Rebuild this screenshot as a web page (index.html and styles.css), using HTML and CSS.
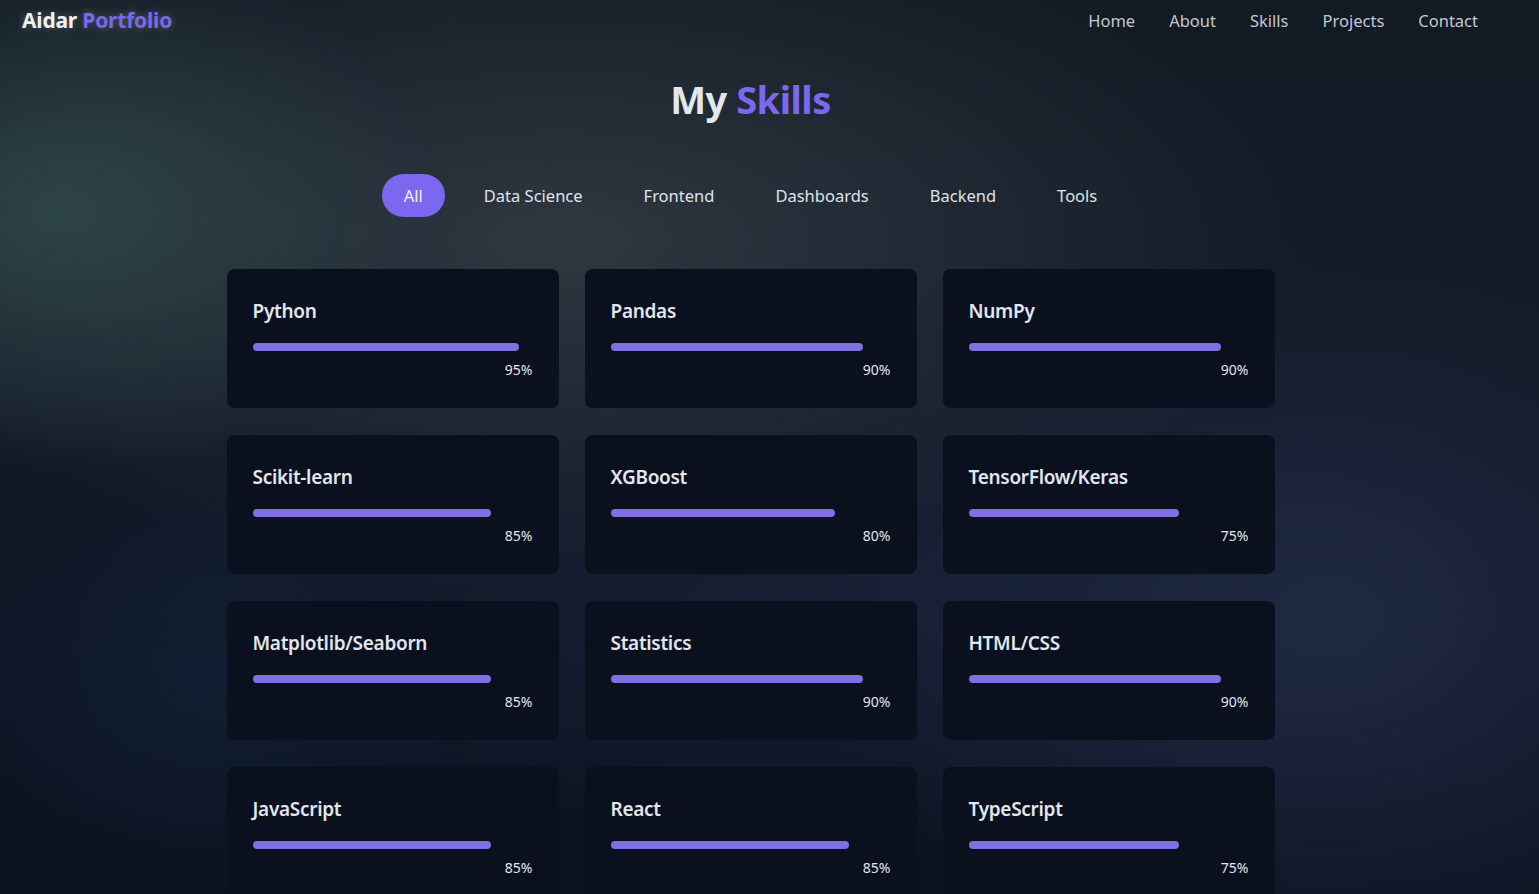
FILE: index.html
```html
<!DOCTYPE html>
<html lang="en">
<head>
<meta charset="utf-8">
<title>Aidar Portfolio — Skills</title>
<link rel="stylesheet" href="styles.css">
</head>
<body>
<div class="page">
  <header class="nav">
    <div class="logo">Aidar <span class="accent">Portfolio</span></div>
    <nav class="links">
      <a href="#">Home</a>
      <a href="#">About</a>
      <a href="#">Skills</a>
      <a href="#">Projects</a>
      <a href="#">Contact</a>
    </nav>
  </header>

  <section class="skills">
    <h1 class="title">My <span class="accent">Skills</span></h1>
    <div class="filters">
      <button class="filter active">All</button>
      <button class="filter">Data Science</button>
      <button class="filter">Frontend</button>
      <button class="filter">Dashboards</button>
      <button class="filter">Backend</button>
      <button class="filter">Tools</button>
    </div>
    <div class="grid">
      <div class="card"><h3>Python</h3><div class="track"><div class="bar" style="width:95%"></div></div><div class="pct">95%</div></div>
      <div class="card"><h3>Pandas</h3><div class="track"><div class="bar" style="width:90%"></div></div><div class="pct">90%</div></div>
      <div class="card"><h3>NumPy</h3><div class="track"><div class="bar" style="width:90%"></div></div><div class="pct">90%</div></div>
      <div class="card"><h3>Scikit-learn</h3><div class="track"><div class="bar" style="width:85%"></div></div><div class="pct">85%</div></div>
      <div class="card"><h3>XGBoost</h3><div class="track"><div class="bar" style="width:80%"></div></div><div class="pct">80%</div></div>
      <div class="card"><h3>TensorFlow/Keras</h3><div class="track"><div class="bar" style="width:75%"></div></div><div class="pct">75%</div></div>
      <div class="card"><h3>Matplotlib/Seaborn</h3><div class="track"><div class="bar" style="width:85%"></div></div><div class="pct">85%</div></div>
      <div class="card"><h3>Statistics</h3><div class="track"><div class="bar" style="width:90%"></div></div><div class="pct">90%</div></div>
      <div class="card"><h3>HTML/CSS</h3><div class="track"><div class="bar" style="width:90%"></div></div><div class="pct">90%</div></div>
      <div class="card"><h3>JavaScript</h3><div class="track"><div class="bar" style="width:85%"></div></div><div class="pct">85%</div></div>
      <div class="card"><h3>React</h3><div class="track"><div class="bar" style="width:85%"></div></div><div class="pct">85%</div></div>
      <div class="card"><h3>TypeScript</h3><div class="track"><div class="bar" style="width:75%"></div></div><div class="pct">75%</div></div>
    </div>
  </section>
</div>
</body>
</html>
```

FILE: styles.css
```css
* { box-sizing: border-box; }

html, body {
  margin: 0;
  height: 100%;
  overflow: hidden;
}

body {
  font-family: "Noto Sans", "Open Sans", sans-serif;
  color: #e2e8f0;
  background-color: #0b1120;
  background-image:
    radial-gradient(ellipse 380px 260px at 60px 210px, rgba(48, 74, 76, 0.85), rgba(48, 74, 76, 0) 100%),
    radial-gradient(ellipse 760px 330px at 560px 240px, rgba(50, 58, 68, 0.9), rgba(50, 58, 68, 0) 100%),
    radial-gradient(ellipse 520px 380px at 1330px 620px, rgba(32, 42, 68, 0.95), rgba(32, 42, 68, 0) 100%),
    radial-gradient(ellipse 700px 260px at 800px 600px, rgba(26, 36, 58, 0.7), rgba(26, 36, 58, 0) 100%),
    radial-gradient(ellipse 260px 220px at 200px 680px, rgba(18, 34, 54, 0.7), rgba(18, 34, 54, 0) 100%),
    linear-gradient(180deg, #121a24 0%, #121a26 40%, #0d1424 75%, #0b111f 100%);
}

.page {
  width: calc(100% - 38px);
}

.accent { color: #7b68ee; }

.nav {
  display: flex;
  justify-content: space-between;
  align-items: center;
  height: 40px;
  padding: 0 22px;
}

.logo {
  font-size: 21px;
  font-weight: 700;
  color: #eef0f6;
  text-shadow: 0 0 8px rgba(255, 255, 255, 0.25);
  letter-spacing: -0.2px;
}

.links {
  display: flex;
  gap: 34px;
  margin-right: 1px;
}

.links a {
  color: #c4c8d0;
  text-decoration: none;
  font-size: 16.5px;
}

.skills {
  display: flex;
  flex-direction: column;
  align-items: center;
}

.title {
  margin: 34px 0 0;
  font-size: 38px;
  font-weight: 700;
  line-height: 50px;
  color: #e2e8f0;
  letter-spacing: -0.5px;
}

.filters {
  display: flex;
  gap: 17px;
  margin-top: 50px;
}

.filter {
  font-family: inherit;
  font-size: 16.5px;
  color: #dfe3ea;
  background: transparent;
  border: none;
  border-radius: 22px;
  height: 43px;
  padding: 0 22px;
  cursor: pointer;
}

.filter.active {
  background: #7b68ee;
  color: #f2f0ff;
}

.grid {
  display: grid;
  grid-template-columns: repeat(3, 332px);
  column-gap: 26px;
  row-gap: 27px;
  margin-top: 52px;
}

.card {
  background: #0b101e;
  border-radius: 8px;
  height: 139px;
  padding: 28px 26px 0;
}

.card h3 {
  margin: 0;
  font-size: 19px;
  font-weight: 600;
  line-height: 28px;
  color: #e2e6ee;
  letter-spacing: -0.3px;
}

.track {
  margin-top: 18px;
  height: 8px;
  border-radius: 4px;
}

.bar {
  height: 100%;
  background: #7f6fe0;
  border-radius: 4px;
}

.pct {
  text-align: right;
  font-size: 14px;
  color: #e2e6ee;
  margin-top: 9px;
  line-height: 20px;
}
```
